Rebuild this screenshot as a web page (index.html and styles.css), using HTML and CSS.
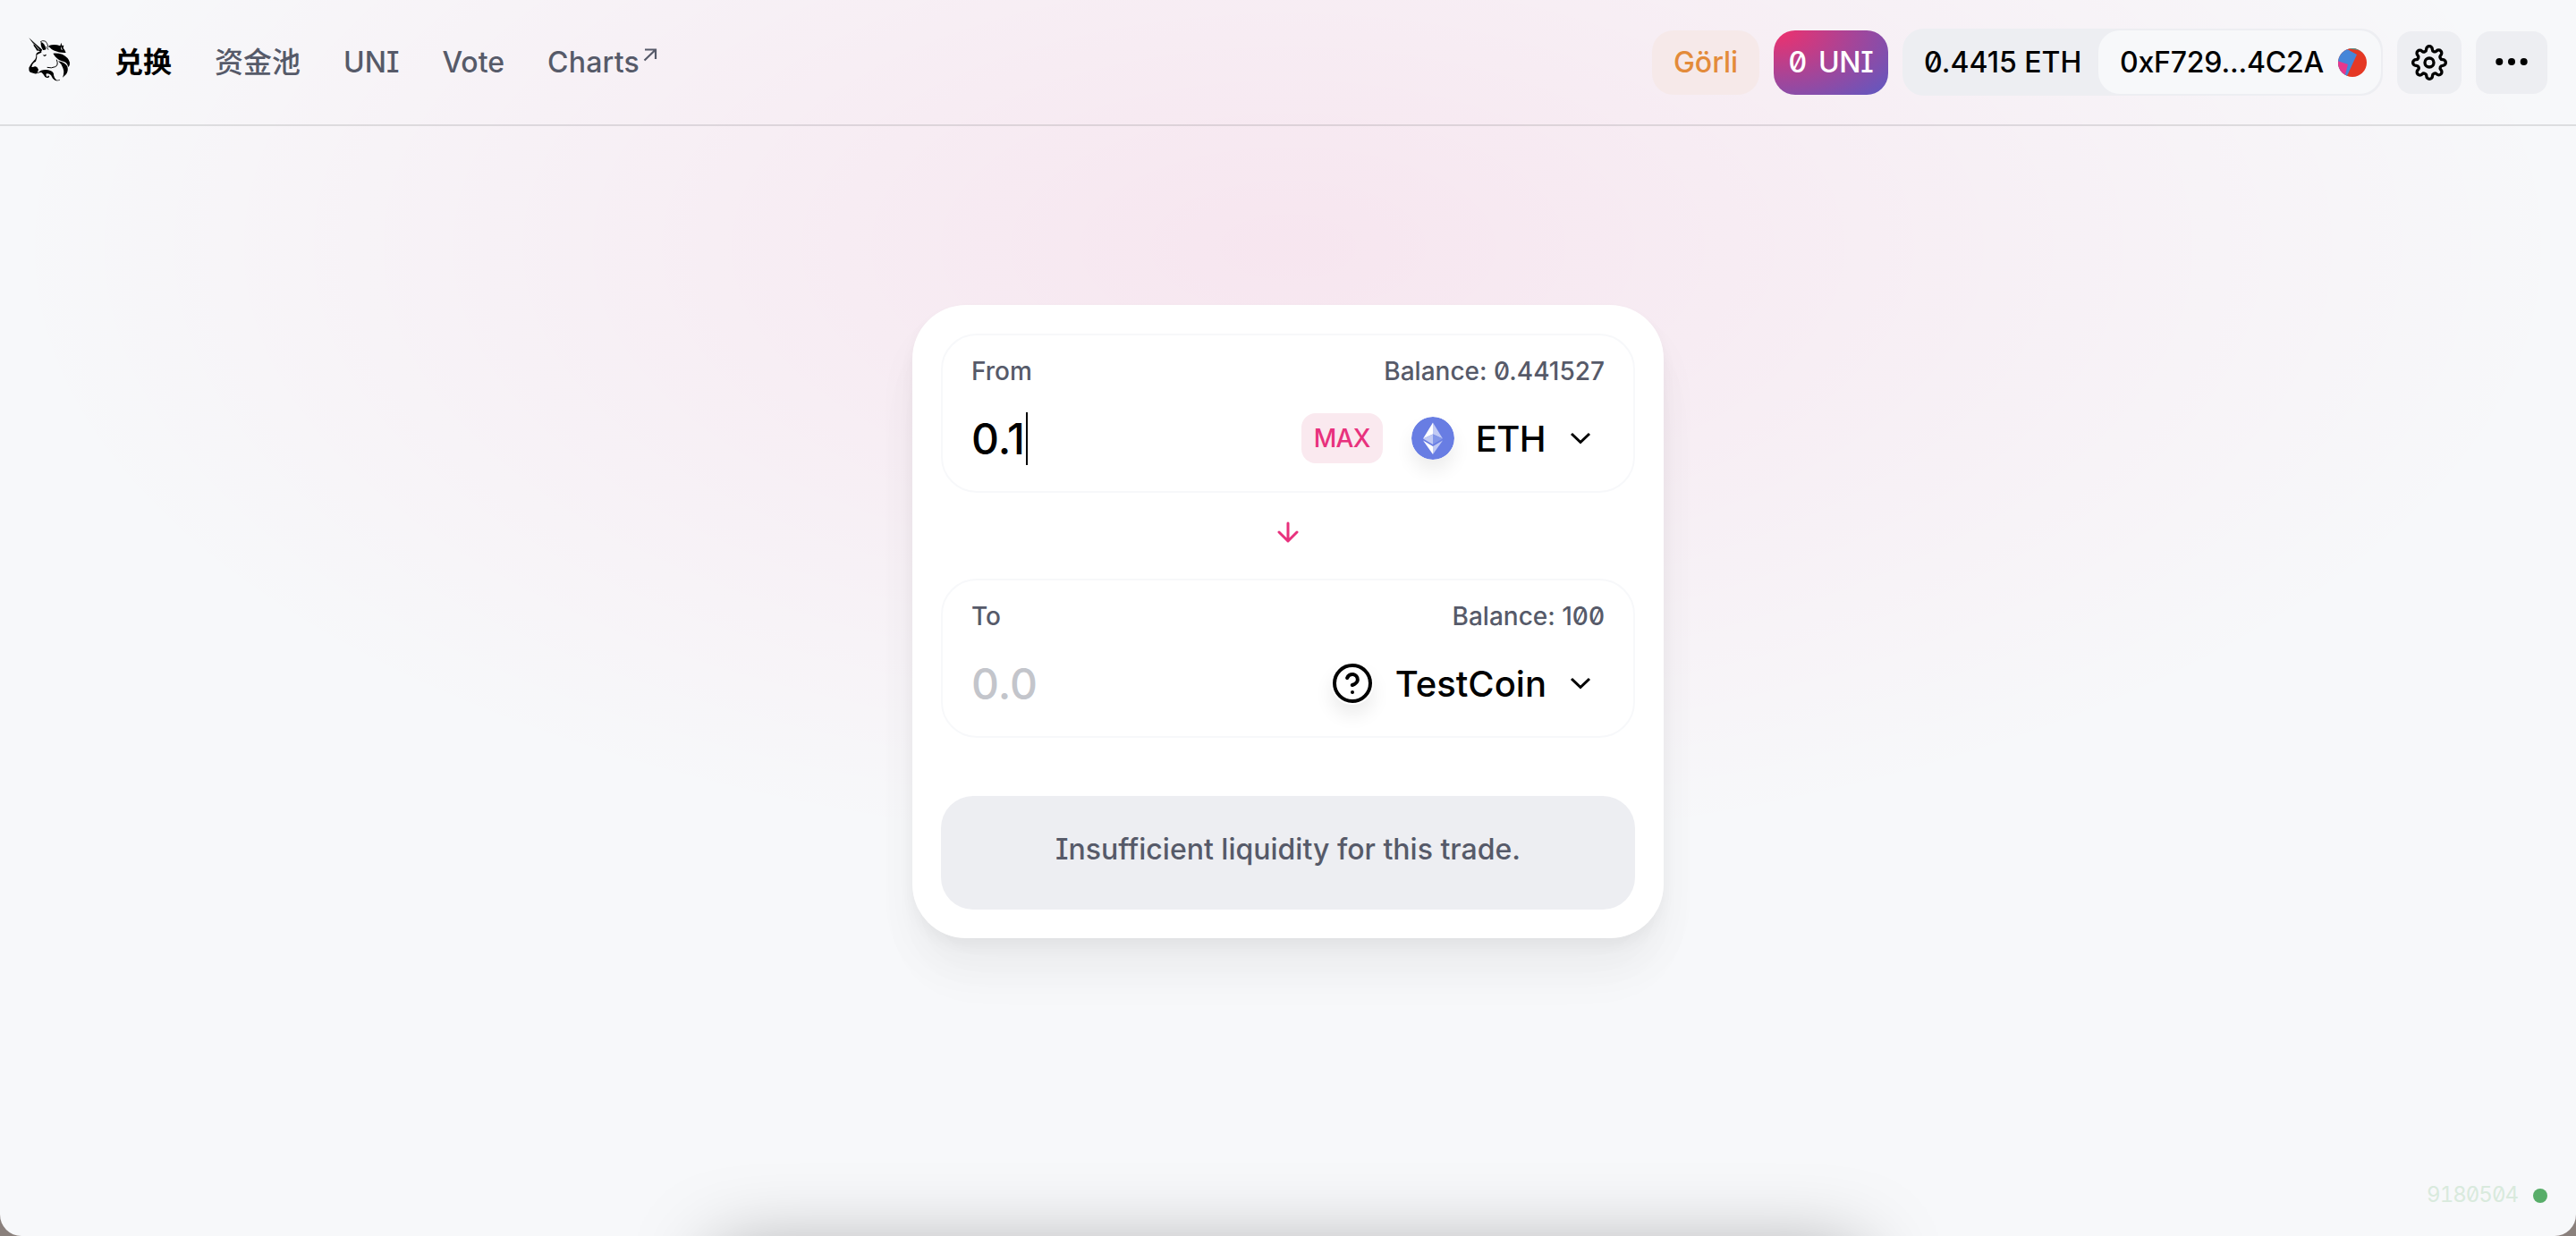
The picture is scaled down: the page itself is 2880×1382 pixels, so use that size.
FILE: index.html
```html
<!DOCTYPE html>
<html lang="zh-CN">
<head>
<meta charset="utf-8">
<title>Uniswap</title>
<link rel="stylesheet" href="styles.css">
</head>
<body>
<div class="app">
  <header class="header">
    <a class="logo">
      <svg viewBox="0 0 144 150" width="48" height="50">
        <path d="M1 1 L46 41 L40 49 Q35 42 28 44 Q24 36 16 26 L18 24 Z"/>
        <path d="M9 10 L38 42 L33 40 Z" fill="#f7f8fa"/>
        <path d="M39 15 Q45 8 56 12 Q64 20 65 30 L81 35 M66 41 L60 30" fill="none" stroke="#000" stroke-width="2.5"/>
        <path d="M41 15 Q53 17 59 39 Q53 43 49 42 Q40 32 41 15 Z"/>
        <path d="M68 27 Q87 21 106 28 L109 17 L112 27 L118 26 L116 35 Q122 41 125 51 Q104 52 87 44 Q73 39 68 27 Z"/>
        <path d="M108 29 L114 42 L109 40 Z" fill="#f7f8fa"/>
        <path d="M82 53 Q98 52 113 56 Q135 67 138 84 Q139 95 133 99 Q129 81 111 79 Q92 71 82 53 Z"/>
        <path d="M99 79 Q121 82 130 97 Q134 112 126 123 L114 134 Q121 117 115 102 Q110 88 99 79 Z"/>
        <path d="M43 46 Q27 49 25 56 Q26 70 19 76 Q6 89 1 101 Q0 112 5 116 L20 121 Q28 122 29 119 L33 107 Q28 96 21 97 Q13 101 10 98 Q13 84 24 80 Q29 70 28 58 Q34 53 43 50 Z"/>
        <path d="M47 55 Q49 67 58 61 L60 56 L55 58 Q49 62 47 55 Z"/>
        <path d="M94 74 Q101 94 89 98 Q77 104 62 100" fill="none" stroke="#000" stroke-width="3"/>
        <path d="M29 119 L42 110 Q59 105 75 112 Q86 118 84 126 Q86 137 95 145 Q82 142 78 132 Q73 120 60 121 Q56 128 63 132 L66 127 L70 131 Q65 138 55 132 Q48 120 43 117 Q37 116 30 121 Z"/>
        <path d="M88 142 L96 144 L105 142" fill="none" stroke="#000" stroke-width="2"/>
      </svg>
    </a>
    <nav class="nav">
      <a class="active">兑换</a>
      <a>资金池</a>
      <a>UNI</a>
      <a>Vote</a>
      <a class="external">Charts<svg class="ext" viewBox="0 0 16 16" width="16" height="16"><path d="M2 1.5H14V12M14 1.5L1.5 13.5"/></svg></a>
    </nav>
    <div class="controls">
      <div class="network">Görli</div>
      <div class="uni">0 <span>UNI</span></div>
      <div class="wallet">
        <div class="amount">0.4415 ETH</div>
        <div class="account">0xF729...4C2A
          <svg viewBox="0 0 32 32" width="32" height="32">
            <clipPath id="disc"><circle cx="16" cy="16" r="16"/></clipPath>
            <g clip-path="url(#disc)">
              <path fill="#e53824" d="M0 0H32V32H0Z"/>
              <path fill="#4686d9" d="M-2-4L12 2L21 7L9 33H-2Z"/>
              <path fill="#e8388c" d="M-1 14L11 18L7 33H-2Z"/>
              <path fill="#459b91" d="M10 0L18-1L28 5L22 2Z"/>
            </g>
          </svg>
        </div>
      </div>
      <button class="icon-button gear">
        <svg viewBox="0 0 24 24" width="40" height="40"><circle cx="12" cy="12" r="3"/><path d="M19.4 15a1.65 1.65 0 0 0 .33 1.82l.06.06a2 2 0 0 1-2.83 2.83l-.06-.06a1.65 1.65 0 0 0-2.8 1.17V21a2 2 0 0 1-4 0v-.09A1.65 1.65 0 0 0 9 19.4a1.65 1.65 0 0 0-1.82.33l-.06.06a2 2 0 0 1-2.83-2.83l.06-.06A1.65 1.65 0 0 0 3.09 14H3a2 2 0 0 1 0-4h.09A1.65 1.65 0 0 0 4.6 9a1.65 1.65 0 0 0-.33-1.82l-.06-.06a2 2 0 0 1 2.83-2.83l.06.06A1.65 1.65 0 0 0 9 4.6a1.65 1.65 0 0 0 1-1.51V3a2 2 0 0 1 4 0v.09a1.65 1.65 0 0 0 2.8 1.17l.06-.06a2 2 0 0 1 2.83 2.83l-.06.06A1.65 1.65 0 0 0 19.4 9a1.65 1.65 0 0 0 1.51 1H21a2 2 0 0 1 0 4h-.09a1.65 1.65 0 0 0-1.51 1z"/></svg>
      </button>
      <button class="icon-button more">
        <svg viewBox="0 0 40 40" width="40" height="40"><circle cx="6.3" cy="19" r="4"/><circle cx="20" cy="19" r="4"/><circle cx="33.7" cy="19" r="4"/></svg>
      </button>
    </div>
  </header>

  <main class="swap">
    <section class="panel">
      <div class="label-row"><span>From</span><span>Balance: 0.441527</span></div>
      <div class="input-row">
        <div class="value">0.1<i class="caret"></i></div>
        <button class="max">MAX</button>
        <div class="token">
          <svg class="coin" viewBox="0 0 48 48" width="48" height="48">
            <circle cx="24" cy="24" r="24" fill="#687de3"/>
            <path fill="#fff" d="M24 6.5V19.5L13 24.5Z"/>
            <path fill="#c1caf4" d="M24 6.5L35 24.5L24 19.5Z"/>
            <path fill="#c1caf4" d="M13 24.5L24 19.5V31Z"/>
            <path fill="#8296e8" d="M24 19.5L35 24.5L24 31Z"/>
            <path fill="#fff" d="M13 26.5L24 33V42Z"/>
            <path fill="#c1caf4" d="M24 33L35 26.5L24 42Z"/>
          </svg>
          <span class="eth">ETH</span>
          <svg class="chevron" viewBox="0 0 24 14" width="24" height="14"><path d="M2 2L12 11.5L22 2"/></svg>
        </div>
      </div>
    </section>
    <div class="switch">
      <svg viewBox="0 0 24 24" width="24" height="24"><path d="M12 2V22M2 12L12 22L22 12"/></svg>
    </div>
    <section class="panel">
      <div class="label-row"><span>To</span><span>Balance: 100</span></div>
      <div class="input-row">
        <div class="value empty">0.0</div>
        <div class="token">
          <svg class="coin" viewBox="0 0 24 24" width="48" height="48"><g fill="none" stroke="#000" stroke-width="2" stroke-linecap="round" stroke-linejoin="round"><circle cx="12" cy="12" r="10"/><path d="M9.09 9a3 3 0 0 1 5.83 1c0 2-3 3-3 3M12 17h.01"/></g></svg>
          <span>TestCoin</span>
          <svg class="chevron" viewBox="0 0 24 14" width="24" height="14"><path d="M2 2L12 11.5L22 2"/></svg>
        </div>
      </div>
    </section>
    <button class="submit">Insufficient liquidity for this trade.</button>
  </main>

  <div class="block"><span>9180504</span><i class="dot"></i></div>
  <div class="dock-shadow"></div>
</div>
</body>
</html>
```
FILE: styles.css
```css
* { box-sizing: border-box; }
body {
  margin: 0;
  background: #8a807c;
  font-family: Inter, "Noto Sans CJK SC", sans-serif;
  font-optical-sizing: none;
  font-feature-settings: "zero", "cv08";
  font-size: 32px;
  color: #000;
}
svg { display: block; flex: none; }
button { border: 0; margin: 0; padding: 0; font: inherit; font-feature-settings: inherit; }
.app {
  position: relative;
  height: 1382px;
  overflow: hidden;
  border-radius: 0 0 24px 24px;
  background: radial-gradient(50% 50% at 50% 50%, #f5006a13 0%, rgba(255,255,255,0) 100%) 0 -415px no-repeat #f7f8fa;
}
.header {
  display: flex;
  align-items: center;
  height: 141px;
  padding: 0 32px;
  border-bottom: 2px solid rgba(0,0,0,.1);
}
.logo { width: 96px; padding-bottom: 5px; }
.nav { display: flex; gap: 48px; color: #565a69; font-weight: 500; line-height: 46px; }
.nav .active { color: #000; font-weight: 600; }
.external { display: flex; letter-spacing: .2px; }
.ext { margin: 7px 0 0 4px; fill: none; stroke: #565a69; stroke-width: 2.2; }
.controls { display: flex; align-items: center; margin-left: auto; font-weight: 500; }
.network, .uni { display: flex; align-items: center; justify-content: center; height: 72px; border-radius: 24px; }
.network { width: 120px; margin-right: 16px; background: #f6e9e9; color: #e38b3a; }
.uni {
  width: 128px;
  margin-right: 16px;
  gap: 13px;
  color: #fff;
  letter-spacing: -.3px;
  background: radial-gradient(174.47% 188.91% at 1.84% 0%, #f0306c 0%, #3265dc 100%);
}
.wallet { display: flex; align-items: center; width: 537px; height: 75px; margin-right: 16px; padding-right: 2px; border-radius: 24px; background: #edeef2; }
.amount { width: 219px; padding-left: 24px; white-space: nowrap; }
.account {
  display: flex;
  align-items: center;
  justify-content: space-between;
  width: 316px;
  height: 71px;
  padding: 0 16px 0 24px;
  border-radius: 24px;
  background: #f7f8fa;
  font-feature-settings: normal;
  letter-spacing: -.2px;
}
.icon-button { display: flex; align-items: center; justify-content: center; height: 70px; border-radius: 16px; background: #edeef2; }
.gear { width: 72px; margin-right: 16px; }
.gear svg { fill: none; stroke: #000; stroke-width: 2; }
.more { width: 80px; }
.swap {
  width: 840px;
  height: 708px;
  margin: 200px auto 0;
  padding: 32px;
  border-radius: 60px;
  background: #fff;
  box-shadow: 0 0 2px rgba(0,0,0,.01), 0 8px 16px rgba(0,0,0,.04), 0 32px 48px rgba(0,0,0,.04), 0 48px 64px rgba(0,0,0,.02);
}
.panel { height: 178px; padding: 24px 34px; border: 2px solid #f7f8fa; border-radius: 40px; font-weight: 500; }
.label-row { display: flex; justify-content: space-between; height: 32px; line-height: 32px; margin-bottom: 26px; font-size: 28px; color: #565a69; }
.label-row, .input-row { margin-left: -2px; margin-right: -2px; }
.input-row { display: flex; align-items: center; height: 66px; }
.value { display: flex; align-items: center; flex: 1; font-size: 48px; font-feature-settings: normal; }
.caret { width: 2px; height: 59px; margin-left: 1px; background: #000; }
.empty { color: #c3c5cb; }
.max { width: 91px; height: 56px; margin-right: 32px; border-radius: 16px; background: #fae9ef; color: #e8317d; font-size: 28px; font-weight: 500; letter-spacing: -.6px; }
.token { display: flex; align-items: center; padding-right: 15px; font-size: 40px; }
.token span { margin: 0 26px 0 24px; }
.token .eth { margin-right: 27px; letter-spacing: -.6px; }
.coin { border-radius: 50%; box-shadow: 0 12px 20px rgba(0,0,0,.075); }
.chevron { fill: none; stroke: #000; stroke-width: 3; }
.switch { display: flex; align-items: center; justify-content: center; height: 96px; padding-bottom: 8px; }
.switch svg { fill: none; stroke: #e8317d; stroke-width: 3; stroke-linecap: round; stroke-linejoin: round; }
.submit { width: 776px; height: 127px; margin-top: 65px; padding-bottom: 8px; border-radius: 36px; background: #edeef2; color: #565a69; font-weight: 500; }
.block { position: absolute; right: 32px; bottom: 32px; display: flex; align-items: center; gap: 17px; font-size: 24px; color: #d9eadd; font-feature-settings: "zero", "tnum"; }
.block span { letter-spacing: -1px; }
.dot { width: 16px; height: 16px; margin-bottom: -2px; border-radius: 50%; background: #58ad69; }
.dock-shadow { position: absolute; left: 800px; right: 800px; top: 1400px; height: 200px; box-shadow: 0 0 90px rgba(0,0,0,.35); }
```
